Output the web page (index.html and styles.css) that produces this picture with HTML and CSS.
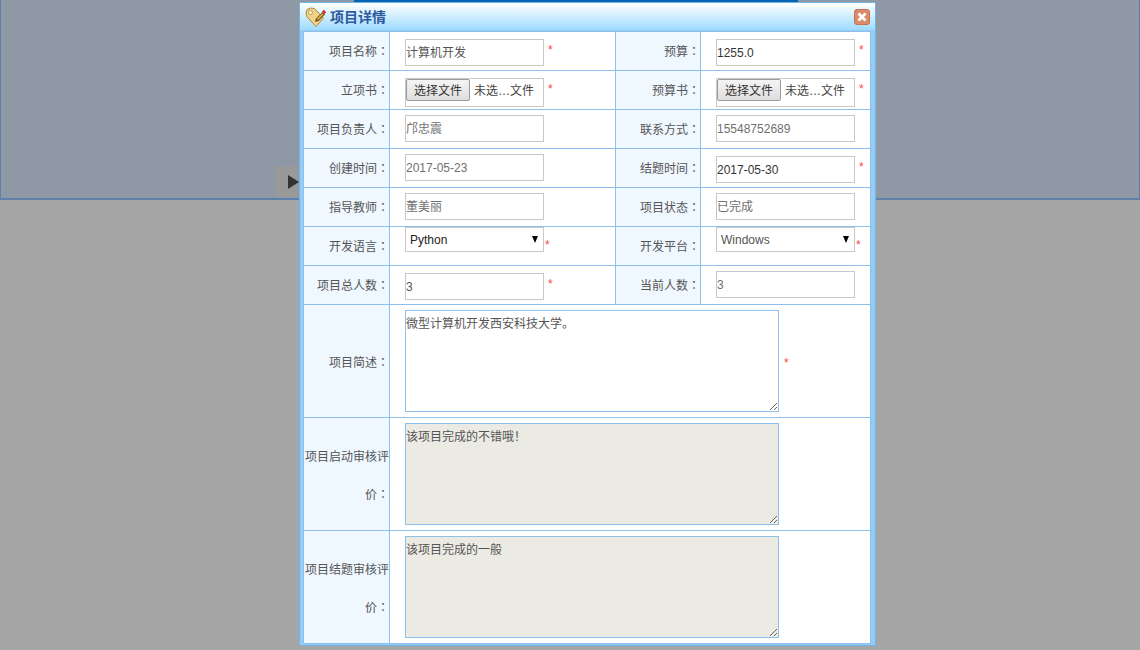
FILE: index.html
```html
<!DOCTYPE html>
<html lang="zh-CN">
<head>
<meta charset="utf-8">
<title>项目详情</title>
<link rel="stylesheet" href="styles.css">
</head>
<body>
<div class="page">
  <div class="panel"><div class="topbar"></div></div>
  <div class="handle"><span class="handle-arrow"></span></div>
</div>
<section class="dialog">
  <header class="dialog-head">
    <svg class="head-icon" width="22" height="20" viewBox="0 0 22 20">
      <path d="M1 6 L2 2.5 L5.5 1 L9.5 1.5 L18.5 11 L11 19.5 L2 10 Z" fill="#eed387" stroke="#b58c3a" stroke-width="1" stroke-linejoin="round"/>
      <circle cx="5.5" cy="5.5" r="2" fill="#fff6dc" stroke="#b58c3a" stroke-width=".8"/>
      <path d="M10 15 L11 11.5 L17.5 5 L20 7.5 L13.5 14 Z" fill="#6b4d22"/>
      <path d="M11.8 11.8 L17.3 6.4 L18.5 7.6 L13 13 Z" fill="#e8b23c"/>
      <path d="M17 4.5 L18.8 2.8 L21.3 5.3 L19.5 7 Z" fill="#d8301f"/>
    </svg>
    <h1 class="dialog-title">项目详情</h1>
    <button class="close" type="button" aria-label="关闭">
      <svg width="10" height="10" viewBox="0 0 10 10"><path d="M1.5 1.5 L8.5 8.5 M8.5 1.5 L1.5 8.5" stroke="#fff" stroke-width="2.8" fill="none"/></svg>
    </button>
  </header>
  <div class="dialog-body">
    <table class="form">
      <colgroup><col class="c1"><col class="c2"><col class="c3"><col class="c4"></colgroup>
      <tbody>
        <tr>
          <th>项目名称<span class="colon" lang="zh-TW">：</span></th>
          <td><input class="field cn" value="计算机开发"><i class="req">*</i></td>
          <th>预算<span class="colon" lang="zh-TW">：</span></th>
          <td><input class="field dark" value="1255.0"><i class="req">*</i></td>
        </tr>
        <tr>
          <th>立项书<span class="colon" lang="zh-TW">：</span></th>
          <td><div class="file"><button type="button" class="file-btn">选择文件</button><span class="file-name">未选…文件</span></div><i class="req">*</i></td>
          <th>预算书<span class="colon" lang="zh-TW">：</span></th>
          <td><div class="file"><button type="button" class="file-btn">选择文件</button><span class="file-name">未选…文件</span></div><i class="req">*</i></td>
        </tr>
        <tr>
          <th>项目负责人<span class="colon" lang="zh-TW">：</span></th>
          <td><input class="field ro cn" value="邝忠震" readonly></td>
          <th>联系方式<span class="colon" lang="zh-TW">：</span></th>
          <td><input class="field ro" value="15548752689" readonly></td>
        </tr>
        <tr>
          <th>创建时间<span class="colon" lang="zh-TW">：</span></th>
          <td><input class="field ro" value="2017-05-23" readonly></td>
          <th>结题时间<span class="colon" lang="zh-TW">：</span></th>
          <td><input class="field dark" value="2017-05-30"><i class="req">*</i></td>
        </tr>
        <tr>
          <th>指导教师<span class="colon" lang="zh-TW">：</span></th>
          <td><input class="field ro cn" value="董美丽" readonly></td>
          <th>项目状态<span class="colon" lang="zh-TW">：</span></th>
          <td><input class="field ro cn" value="已完成" readonly></td>
        </tr>
        <tr>
          <th>开发语言<span class="colon" lang="zh-TW">：</span></th>
          <td><span class="select-wrap"><select class="pick dark"><option>Python</option></select></span><i class="req low">*</i></td>
          <th>开发平台<span class="colon" lang="zh-TW">：</span></th>
          <td><span class="select-wrap"><select class="pick"><option>Windows</option></select></span><i class="req low">*</i></td>
        </tr>
        <tr>
          <th>项目总人数<span class="colon" lang="zh-TW">：</span></th>
          <td><input class="field" value="3"><i class="req">*</i></td>
          <th>当前人数<span class="colon" lang="zh-TW">：</span></th>
          <td><input class="field ro" value="3" readonly></td>
        </tr>
        <tr class="area-row">
          <th>项目简述<span class="colon" lang="zh-TW">：</span></th>
          <td colspan="3"><textarea class="area">微型计算机开发西安科技大学。</textarea><i class="req mid">*</i></td>
        </tr>
        <tr class="area-row">
          <th>项目启动审核评价<span class="colon" lang="zh-TW">：</span></th>
          <td colspan="3"><textarea class="area locked" readonly>该项目完成的不错哦！</textarea></td>
        </tr>
        <tr class="area-row">
          <th>项目结题审核评价<span class="colon" lang="zh-TW">：</span></th>
          <td colspan="3"><textarea class="area locked" readonly>该项目完成的一般</textarea></td>
        </tr>
      </tbody>
    </table>
  </div>
</section>
</body>
</html>
```
FILE: styles.css
```css
* { box-sizing: border-box; }
html, body { margin: 0; height: 100%; overflow: hidden; }
body {
  background: #a6a6a6;
  font-family: "Liberation Sans", "Noto Sans CJK SC", sans-serif;
  font-size: 12px;
  color: #555;
}
.page { height: 200px; position: relative; }
.panel {
  height: 200px;
  background: #8f99a5;
  border-left: 1px solid #5f80ab;
  border-right: 1px solid #5f80ab;
  border-bottom: 2px solid #5f80ab;
}
.topbar {
  width: 444px;
  height: 2px;
  margin-left: 353px;
  background: #0464b4;
}
.handle {
  position: absolute;
  left: 276px;
  top: 166px;
  width: 24px;
  height: 31px;
  background: #999999;
  display: flex;
  align-items: center;
  padding-left: 12px;
}
.handle-arrow {
  width: 0;
  height: 0;
  border-left: 11px solid #333;
  border-top: 7.5px solid transparent;
  border-bottom: 7.5px solid transparent;
}
.dialog {
  position: absolute;
  left: 299px;
  top: 2px;
  width: 577px;
  height: 644px;
  background: #93ccf5;
  border: 1px solid #6eb4e4;
  display: flex;
  flex-direction: column;
}
.dialog-head {
  height: 27px;
  flex: none;
  display: flex;
  align-items: center;
  padding: 0 5px;
  background: linear-gradient(#fff, #9edcff);
}
.head-icon { flex: none; margin-right: 3px; }
.dialog-title {
  margin: 0;
  flex: 1;
  font-size: 14px;
  line-height: 20px;
  font-weight: bold;
  color: #2c5a9e;
}
.close {
  width: 16px;
  height: 16px;
  padding: 0;
  border: 1px solid #c5724f;
  border-radius: 3px;
  background: #dc8a6c;
  display: flex;
  align-items: center;
  justify-content: center;
}
.dialog-body {
  flex: 1;
  padding: 1px 0 0 3px;
  min-height: 0;
}
.form {
  width: 567px;
  border-collapse: collapse;
  table-layout: fixed;
  background: #fff;
  border: 1px solid #90c0ea;
}
.c1 { width: 86px; }
.c2 { width: 226px; }
.c3 { width: 85px; }
.c4 { width: 170px; }
.form th, .form td {
  border: 1px solid #90c0ea;
  height: 39px;
  padding: 0;
}
.form th {
  background: #eff7ff;
  font-weight: normal;
  text-align: right;
  color: #555;
  line-height: 36px;
  padding-top: 2px;
}
.colon {
  font-family: "Noto Sans CJK TC", sans-serif;
  line-height: 1;
}
.form td {
  padding-left: 15px;
  white-space: nowrap;
  vertical-align: top;
}
.field {
  width: 139px;
  height: 27px;
  margin-top: 7px;
  padding: 0;
  border: 1px solid #c8c8c8;
  font: inherit;
  color: #555;
  vertical-align: top;
  outline: 0;
  background: #fff;
}
.field.cn { padding-bottom: 2px; }
.field.ro { color: #707070; margin-top: 5px; }
.field.dark { color: #333; }
.file {
  display: inline-flex;
  align-items: flex-start;
  width: 139px;
  height: 29px;
  margin-top: 7px;
  border: 1px solid #c8c8c8;
  vertical-align: top;
  background: #fff;
}
.file-btn {
  width: 64px;
  height: 22px;
  padding: 0 0 2px;
  margin-right: 4px;
  font: inherit;
  color: #333;
  border: 1px solid #9a9a9a;
  border-radius: 2px;
  background: linear-gradient(#f4f4f4, #dedede);
}
.file-name { color: #444; line-height: 25px; }
.req {
  display: inline-block;
  margin: 11px 0 0 4px;
  font-style: normal;
  color: #f44;
  vertical-align: top;
}
.req.low { margin-left: 1px; }
.req.mid { margin: 51px 0 0 5px; }
.select-wrap {
  position: relative;
  display: inline-block;
  width: 139px;
  height: 25px;
  vertical-align: top;
}
.select-wrap::after {
  content: "";
  position: absolute;
  right: 6px;
  top: 9px;
  border-top: 7px solid #000;
  border-left: 3.5px solid transparent;
  border-right: 3.5px solid transparent;
  pointer-events: none;
}
.pick {
  appearance: none;
  display: block;
  width: 100%;
  height: 100%;
  padding: 0 0 0 4px;
  border: 1px solid #c8c8c8;
  border-radius: 0;
  font: inherit;
  color: #555;
  background: #fff;
  outline: 0;
}
.pick.dark { color: #222; }
.area-row th, .area-row td { height: 113px; }
.area-row th {
  white-space: normal;
  line-height: 38px;
  padding-left: 1px;
  padding-top: 4px;
}
.area {
  width: 374px;
  height: 102px;
  margin-top: 5px;
  display: inline-block;
  padding: 3px 0 0;
  border: 1px solid #90c0ea;
  font: inherit;
  color: #555;
  vertical-align: top;
  outline: 0;
  background: #fff;
}
.area.locked { background: #ebeae3; }
```
